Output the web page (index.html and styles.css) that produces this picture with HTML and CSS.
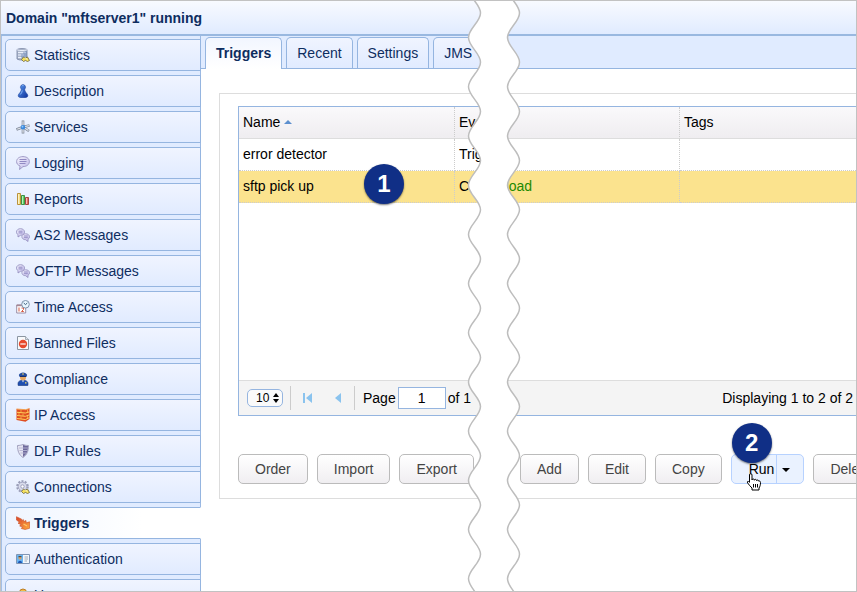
FILE: index.html
```html
<!DOCTYPE html>
<html lang="en">
<head>
<meta charset="utf-8">
<meta name="viewport" content="width=device-width, initial-scale=1">
<title>Domain "mftserver1" running</title>
<link rel="stylesheet" href="styles.css">
</head>
<body>
<div class="window">
  <svg class="defs" aria-hidden="true">
    <defs>
      <linearGradient id="blue" x2="1" y2="1"><stop offset="0" stop-color="#5d9bf0"/><stop offset="1" stop-color="#0b2f9a"/></linearGradient>
      <linearGradient id="lilac" x2="1" y2="1"><stop offset="0" stop-color="#f6f5ff"/><stop offset="1" stop-color="#bdb6e8"/></linearGradient>
      <linearGradient id="fire" x2="1" y2="1"><stop offset="0" stop-color="#d9432a"/><stop offset="1" stop-color="#ffab3d"/></linearGradient>
      <symbol id="bubbles" viewBox="0 0 14 14">
        <path d="M4.500.7c2.300 0 4 1.400 4 3.300S6.800 7.300 4.500 7.300L2 9V6.600C1 6 .5 5.100.5 4 .5 2.100 2.200.7 4.500.7z" fill="url(#lilac)" stroke="#8f8abb" stroke-width=".8"/>
        <path d="M2.500 3.200h4M2.500 4.900h4" stroke="#7f77b8" stroke-width=".8"/>
        <path d="M9.700 5.800c2.200 0 3.800 1.300 3.800 3 0 1.100-.6 2-1.500 2.500v2.200l-2.400-1.800c-2 0-3.700-1.200-3.700-2.900s1.600-3 3.800-3z" fill="url(#lilac)" stroke="#8f8abb" stroke-width=".8"/>
        <path d="M7.800 8h4M7.800 9.700h4" stroke="#7f77b8" stroke-width=".8"/>
      </symbol>
    </defs>
  </svg>

  <header class="titlebar"><h1>Domain "mftserver1" running</h1></header>

  <div class="body">
    <nav class="sidebar" aria-label="Domain">
      <a class="item" href="#statistics">
        <svg class="icon" viewBox="0 0 14 14" aria-hidden="true"><path d="M1 1.500C3 .3 9 .3 11 1.500v9C9 12.500 3 12.500 1 11z" fill="#aeb9cf" stroke="#7582a0" stroke-width=".8"/><path d="M1 1.800c3 1 7 1 10 0M2 4.500h8M2 7h6M2 9.500h4" stroke="#f1f5ff" stroke-width=".9" fill="none"/><path d="M8 4v5M10 3v6M6 6v4" stroke="#6684b8" stroke-width=".8"/><path d="M5.500 11.500l2-2.500 2 1 2-1 2 3.500-2 1-2-1-2 1z" fill="#f3df59" stroke="#6b633d" stroke-width=".8"/><path d="M9 9.500l2 2" stroke="#fff" stroke-width=".9"/></svg>
        Statistics</a>
      <a class="item" href="#description">
        <svg class="icon" viewBox="0 0 14 14" aria-hidden="true"><path d="M7 .5a2.700 2.700 0 0 1 1.700 4.700c.2 2 1.200 3.300 2.500 4.800 1 1.200.8 2.800-.4 3.200-2 .7-5.600.7-7.600 0-1.200-.4-1.400-2-.4-3.200 1.300-1.500 2.300-2.800 2.500-4.800A2.700 2.700 0 0 1 7 .5z" fill="url(#blue)" stroke="#1b4196" stroke-width=".5"/><path d="M6 2c.6-.7 1.300-.6 1.700-.2M6.300 6.500c-.2 1.700-1 3-2 4" stroke="#8fc0ff" stroke-width=".9" fill="none"/></svg>
        Description</a>
      <a class="item" href="#services">
        <svg class="icon" viewBox="0 0 14 14" aria-hidden="true"><path d="M7 7V.5M7 7l6.500-1.500M7 7l6 4M7 7v6.500M7 7L.5 9.500" stroke="#7e8797" stroke-width="2.600"/><path d="M7 7V1.200M7 7l5.800-1.400M7 7l5.500 3.500M7 7v5.800M7 7L1.200 9.300" stroke="#e4e8ee" stroke-width="1.200"/><circle cx="7" cy="7.300" r="2.300" fill="#3987dc"/><circle cx="6.500" cy="6.700" r=".9" fill="#91ccff"/></svg>
        Services</a>
      <a class="item" href="#logging">
        <svg class="icon" viewBox="0 0 14 14" aria-hidden="true"><path d="M7 .6c3.700 0 6.400 2.100 6.400 5s-2.700 5-6.400 5l-3.500 2.900.6-3.500C1.900 9.200.6 7.600.6 5.600c0-2.900 2.700-5 6.400-5z" fill="url(#lilac)" stroke="#9691c0" stroke-width=".9"/><path d="M3.500 3.500h7M3.500 5.500h7M3.500 7.500h6" stroke="#8981bd" stroke-width=".9"/></svg>
        Logging</a>
      <a class="item" href="#reports">
        <svg class="icon" viewBox="0 0 14 14" aria-hidden="true"><path d="M1.500 1.500h3v11h-3z" fill="#f7df82" stroke="#b9923c"/><path d="M5.500 3.500h3v9h-3z" fill="#60d667" stroke="#3d9144"/><path d="M9.500 5.500h3v7h-3z" fill="#ec6b61" stroke="#a24840"/><path d="M2.500 2v10M6.500 4v8M10.500 6v6" stroke="#fff" stroke-opacity=".55"/></svg>
        Reports</a>
      <a class="item" href="#as2"><svg class="icon" aria-hidden="true"><use href="#bubbles"/></svg>AS2 Messages</a>
      <a class="item" href="#oftp"><svg class="icon" aria-hidden="true"><use href="#bubbles"/></svg>OFTP Messages</a>
      <a class="item" href="#time">
        <svg class="icon" viewBox="0 0 14 14" aria-hidden="true"><path d="M.7 5h9v8h-9z" fill="#fff" stroke="#92829c" stroke-width=".9"/><path d="M.7 5.400h9" stroke="#a68794" stroke-width="1.600"/><path d="M3 7.500v4M5.500 8h2v1.500l-2 2h2.300" stroke="#d75a42" fill="none"/><circle cx="9.500" cy="4.300" r="3.800" fill="#e8f7ff" stroke="#7f94ab"/><path d="M7.700 3l1.800 1.600L11.300 3" stroke="#3c5c7b" fill="none"/></svg>
        Time Access</a>
      <a class="item" href="#banned">
        <svg class="icon" viewBox="0 0 14 14" aria-hidden="true"><path d="M1.500.5h8l3 3v10h-11z" fill="#f8fafc" stroke="#8b95a2"/><path d="M9.500.5v3h3" fill="#dce2e8" stroke="#8b95a2" stroke-width=".7"/><circle cx="7" cy="8" r="4.200" fill="#e6482b"/><path d="M4.300 8h5.400" stroke="#fff" stroke-opacity=".85" stroke-width="1.400"/></svg>
        Banned Files</a>
      <a class="item" href="#compliance">
        <svg class="icon" viewBox="0 0 14 14" aria-hidden="true"><path d="M2.200 13.500c-.7-3 .3-5.300 4.800-5.300s5.500 2.300 4.800 5.300z" fill="#1e4fb1" stroke="#173679" stroke-width=".6"/><circle cx="7" cy="5.500" r="3" fill="#e6a764"/><path d="M2.800 3C3.500 1.200 5 .4 7 .4s3.500.8 4.200 2.600L10.300 5H3.700z" fill="#234b9d"/><path d="M4 4.500h6" stroke="#152f6c"/><path d="M7 1.300v1.500M9 10.800h1.500" stroke="#ffdc57" stroke-width="1.200"/><path d="M6 8.500l1 2 1-2z" fill="#dceaff"/></svg>
        Compliance</a>
      <a class="item" href="#ip">
        <svg class="icon" viewBox="0 0 14 14" aria-hidden="true"><path d="M.5 1l9 .7L13.500.6V11l-4 2.700L.5 12z" fill="#df4f22"/><path d="M.5 1l9 .7 4-1.100" stroke="#f2a251" fill="none"/><path d="M1 4.300l8.500.7 4-1.200M1 7.500l8.500.8 4-1.500M1 10.500l8.500 1 4-2" stroke="#ffd05a" stroke-width="1" fill="none"/><path d="M5 2v2.500M3 5v2.500M7 5.500v2.500M5 8.500v2.500M11.500 2v2.500M11.500 8v2.500" stroke="#ffc050" stroke-width=".7"/></svg>
        IP Access</a>
      <a class="item" href="#dlp">
        <svg class="icon" viewBox="0 0 14 14" aria-hidden="true"><path d="M1.500 1.500C4 1.500 5.500 1 7 .5c1.500.5 3 1 5.500 1 0 5.500-1.500 9.500-5.500 12-4-2.500-5.500-6.500-5.500-12z" fill="#e5e5f2" stroke="#9a98b8" stroke-width=".9"/><path d="M7 1v12c3.500-2.500 5-6 5-11C10 2 8.500 1.500 7 1z" fill="#6e6a9c"/><path d="M3 4h8.500M3.500 6.500h7.500M4.500 9h5.500" stroke="#b6b3d2" stroke-width=".9"/></svg>
        DLP Rules</a>
      <a class="item" href="#connections">
        <svg class="icon" viewBox="0 0 14 14" aria-hidden="true"><circle cx="6.500" cy="6.500" r="5.300" fill="none" stroke="#9a9eb8" stroke-width="2" stroke-dasharray="2 1.330"/><circle cx="6.500" cy="6.500" r="4.300" fill="#d9dcec" stroke="#a3a6c2"/><circle cx="6.500" cy="6.500" r="1.700" fill="#fff" stroke="#9c9fbb"/><path d="M5.500 11.500l2-2.500 2 1 2-1 2 3.500-2 1-2-1-2 1z" fill="#f3df59" stroke="#6b633d" stroke-width=".8"/><path d="M9 9.500l2 2" stroke="#fff" stroke-width=".9"/></svg>
        Connections</a>
      <a class="item selected" href="#triggers" aria-current="page">
        <svg class="icon" viewBox="0 0 14 14" aria-hidden="true"><path d="M.4.700L5.700 3.200 5.500 5l1.800-1.500.5 2L10 4.500l.2 2.300 3.400-1v6.500l-4.500 1.200-3.800-1 1.200-1.700-2.800-.7 1.200-1.500-2.900-1.400 1.500-1.100L.4 4z" fill="url(#fire)" stroke="#c94b20" stroke-width=".6"/><path d="M7.500 8l3.500 2" stroke="#ffc668" stroke-width="1.200"/></svg>
        Triggers</a>
      <a class="item" href="#authentication">
        <svg class="icon" viewBox="0 0 14 14" aria-hidden="true"><path d="M.5 2.500h13v9H.5z" fill="#f2f7fc" stroke="#8195b3"/><path d="M1 3h6v8H1z" fill="#68b4f2"/><path d="M2 11c0-3 4-3 4 0z" fill="#1f57b5"/><circle cx="4" cy="5.900" r="1.600" fill="#d8a265"/><path d="M2.500 4.700h3" stroke="#3a352f"/><path d="M8.500 5H12M8.500 7H12M8.500 9H11" stroke="#a4adba"/></svg>
        Authentication</a>
      <a class="item" href="#users">
        <svg class="icon" viewBox="0 0 14 14" aria-hidden="true"><circle cx="7" cy="4.500" r="3.500" fill="#f4bc42" stroke="#bc7c22"/><path d="M2 13.500c0-6 10-6 10 0z" fill="#316fc6"/></svg>
        Users</a>
    </nav>

    <main class="main">
      <div class="tabs" role="tablist">
        <button class="tab active" type="button" role="tab" aria-selected="true">Triggers</button>
        <button class="tab" type="button" role="tab" aria-selected="false">Recent</button>
        <button class="tab" type="button" role="tab" aria-selected="false">Settings</button>
        <button class="tab" type="button" role="tab" aria-selected="false">JMS</button>
      </div>

      <section class="panel">
        <div class="grid">
          <div class="rows">
            <table>
              <colgroup><col class="col-name"><col class="col-event"><col></colgroup>
              <thead>
                <tr>
                  <th scope="col" aria-sort="ascending">Name<svg class="sort" viewBox="0 0 8 4" aria-hidden="true"><path d="M0 4l4-4 4 4z"/></svg></th>
                  <th scope="col">Event</th>
                  <th scope="col">Tags</th>
                </tr>
              </thead>
              <tbody>
                <tr><td>error detector</td><td>Trigger</td><td></td></tr>
                <tr class="picked"><td>sftp pick up<span class="badge badge-row">1</span></td><td><div class="event"><span>C</span><span class="kind">Upload</span></div></td><td></td></tr>
              </tbody>
            </table>
          </div>
          <div class="pager">
            <span class="size">
              <select aria-label="Rows per page"><option>10</option><option>20</option></select>
              <svg viewBox="0 0 6 10" aria-hidden="true"><path d="M0 4l3-4 3 4zM0 6l3 4 3-4z"/></svg>
            </span>
            <div class="steps">
              <button class="step" type="button" aria-label="First page"><svg viewBox="0 0 10 10" aria-hidden="true"><path d="M0 0h2v10H0zM9 0v10L3 5z"/></svg></button>
              <button class="step" type="button" aria-label="Previous page"><svg viewBox="0 0 10 10" aria-hidden="true"><path d="M8 0v10L2 5z"/></svg></button>
            </div>
            <label for="page">Page</label>
            <input id="page" type="text" value="1">
            <span>of 1</span>
            <span class="summary">Displaying 1 to 2 of 2</span>
          </div>
        </div>

        <div class="actions">
          <div class="group">
            <button class="btn" type="button">Order</button>
            <button class="btn" type="button">Import</button>
            <button class="btn" type="button">Export</button>
          </div>
          <div class="group">
            <button class="btn" type="button">Add</button>
            <button class="btn" type="button">Edit</button>
            <button class="btn" type="button">Copy</button>
            <div class="split">
              <button class="run" type="button">Run</button>
              <button class="more" type="button" aria-label="Run options"><svg viewBox="0 0 8 4" aria-hidden="true"><path d="M0 0h8L4 4z"/></svg></button>
              <span class="badge badge-run">2</span>
              <svg class="cursor" viewBox="0 0 16 18" aria-hidden="true"><path d="M3.500 2c0-1.800 2.500-1.800 2.500 0v5c0-1.400 2.300-1.400 2.300.2C8.300 6 10.600 6 10.700 7.700c.1-1.100 2-.9 2.100.5 1-.5 1.700.2 1.700 1.300 0 2.500-.5 4-1.500 5.500v2H6v-2c-1.500-1.500-3-3-4.300-5C.7 8.400 2 7.700 3.500 9.300z"/><path class="lines" d="M7.500 11v3.500M9.500 11v3.500M11.500 11v3.500"/></svg>
            </div>
            <button class="btn" type="button">Delete</button>
          </div>
        </div>
      </section>
    </main>
  </div>

  <svg class="tear" viewBox="0 0 54 592" preserveAspectRatio="xMidYMin slice" aria-hidden="true">
    <path d="M1.500-11.600c0 9 12 15.600 12 24.600s-12 15.600-12 24.600s12 15.600 12 24.600s-12 15.600-12 24.600s12 15.600 12 24.600s-12 15.600-12 24.600s12 15.600 12 24.600s-12 15.600-12 24.600s12 15.600 12 24.600s-12 15.600-12 24.600s12 15.600 12 24.600s-12 15.600-12 24.600s12 15.600 12 24.600s-12 15.600-12 24.600s12 15.600 12 24.600s-12 15.600-12 24.600s12 15.600 12 24.600s-12 15.600-12 24.600s12 15.600 12 24.600s-12 15.600-12 24.600s12 15.600 12 24.600s-12 15.600-12 24.600s12 15.600 12 24.600s-12 15.600-12 24.600s12 15.600 12 24.600s-12 15.600-12 24.600h39c0-9 12-15.600 12-24.600s-12-15.600-12-24.600s12-15.600 12-24.600s-12-15.600-12-24.600s12-15.600 12-24.600s-12-15.600-12-24.600s12-15.600 12-24.600s-12-15.600-12-24.600s12-15.600 12-24.600s-12-15.600-12-24.600s12-15.600 12-24.600s-12-15.600-12-24.600s12-15.600 12-24.600s-12-15.600-12-24.600s12-15.600 12-24.600s-12-15.600-12-24.600s12-15.600 12-24.600s-12-15.600-12-24.600s12-15.600 12-24.600s-12-15.600-12-24.600s12-15.600 12-24.600s-12-15.600-12-24.600s12-15.600 12-24.600s-12-15.600-12-24.600s12-15.600 12-24.600s-12-15.600-12-24.600z"/>
  </svg>
</div>
</body>
</html>
```
FILE: styles.css
```css
* { box-sizing: border-box; }

body {
  margin: 0;
  font: 14px/20px "Liberation Sans", Arial, sans-serif;
  color: #000;
  background: #fff;
}

button, input, select { font: inherit; color: inherit; margin: 0; }

.defs { position: absolute; width: 0; height: 0; }

.window {
  position: relative;
  display: flex;
  flex-direction: column;
  height: 100vh;
  border: 1px solid #c2c2c2;
  overflow: hidden;
}

.titlebar {
  flex: none;
  padding: 7px 5px 6px;
  background: linear-gradient(#f8faff, #e0ebff);
  border-bottom: 2px solid #99b8e0;
}

.titlebar h1 { margin: 0; font-size: 14px; line-height: 20px; color: #0e2d5f; }

.body { flex: 1; display: flex; min-height: 0; }

/* Sidebar */
.sidebar {
  flex: none;
  display: flex;
  flex-direction: column;
  gap: 4px;
  width: 200px;
  padding: 3px 0 0 3px;
  background: #e0ebff;
  border-left: 1px solid #a3bfe6;
  box-shadow: inset -1px 0 #9bb9e3;
}

.item {
  flex: none;
  display: flex;
  align-items: center;
  gap: 4px;
  height: 32px;
  padding-left: 10px;
  border: 1px solid #95b5e0;
  border-radius: 5px 0 0 5px;
  background: linear-gradient(#f0f4ff, #e1ebff);
  color: #0e2d5f;
  text-decoration: none;
}

.item.selected {
  font-weight: bold;
  background: linear-gradient(to right, #eff5ff, #fff 70%);
  border-right-color: #fff;
}

.icon { flex: none; width: 14px; height: 14px; }

/* Tabs */
.main { flex: 1; min-width: 0; overflow: hidden; }

.tabs {
  display: flex;
  gap: 4px;
  padding: 1px 4px 0;
  background: #e0ebff;
  border-bottom: 1px solid #95b5e0;
}

.tab {
  height: 31px;
  padding: 0 10px;
  border: 1px solid #95b5e0;
  border-bottom: 0;
  border-radius: 5px 5px 0 0;
  background: linear-gradient(#f0f4ff, #e1ebff);
  color: #0e2d5f;
}

.tab.active {
  font-weight: bold;
  background: linear-gradient(#f2f6ff, #fff);
  margin-bottom: -1px;
  height: 32px;
  padding-bottom: 2px;
}

/* Panel */
.panel {
  margin: 24px 0 0 18px;
  padding: 12px 0 14px 18px;
  border: 1px solid #ddd;
  border-right: 0;
}

.grid { border: 1px solid #95b5e0; border-right: 0; }

.rows { min-height: 273px; }

table { width: 100%; table-layout: fixed; border-collapse: separate; border-spacing: 0; }

.col-name { width: 216px; }
.col-event { width: 225px; }

th, td {
  position: relative;
  height: 32px;
  padding: 0 4px 2px;
  border: 0 dotted #ccc;
  border-width: 0 1px 1px 0;
  text-align: left;
  font-weight: normal;
}

th:last-child, td:last-child { border-right: 0; }

th { border-bottom: 1px solid #ddd; background: linear-gradient(#faf9fb, #efedf0); }

.picked td { background: #fbe38e; }

.sort { width: 8px; height: 4px; margin: 0 0 3px 4px; fill: #5c8fce; }

.event { display: flex; justify-content: space-between; width: 73px; }
.kind { color: #1e8a00; }

/* Pager */
.pager {
  display: flex;
  align-items: center;
  height: 35px;
  padding: 0 3px 0 8px;
  border-top: 1px solid #ddd;
  background: #f4f4f4;
}

.size { position: relative; display: flex; }

.size select {
  appearance: none;
  width: 36px;
  height: 18px;
  padding: 0 8px;
  border: 1px solid #95b5e0;
  border-radius: 5px;
  background: #fafafa;
  font-size: 12px;
  line-height: 16px;
}

.size svg { position: absolute; right: 4px; top: 4px; width: 6px; height: 10px; pointer-events: none; }

.steps {
  display: flex;
  margin: 0 8px 0 7px;
  padding: 0 1px 0 2px;
  border: 1px solid #ccc;
  border-width: 0 1px;
}

.step { width: 30px; height: 24px; padding: 0; border: 0; background: none; line-height: 0; }
.step svg { width: 10px; height: 10px; fill: #8ac3ee; }

.pager label { margin-right: 2px; }

.pager input {
  width: 48px;
  height: 22px;
  margin-right: 2px;
  padding: 0;
  border: 1px solid #95b5e0;
  background: #fff;
  text-align: center;
}

.summary { margin-left: auto; }

/* Actions */
.actions { display: flex; gap: 46px; margin-top: 38px; }
.group { display: flex; flex: none; gap: 9px; }

.btn, .split {
  flex: none;
  height: 30px;
  border: 1px solid #bbb;
  border-radius: 5px;
}

.btn { padding: 0 16px; background: linear-gradient(#fff, #f0eef1); color: #444; }

.split {
  position: relative;
  display: flex;
  border-color: #b7d2ff;
  background: #eaf2ff;
}

.split button { padding: 0; border: 0; background: none; }
.split .run { padding: 0 2px 0 17px; }
.split .more { width: 27px; border-left: 1px solid #b7d2ff; line-height: 0; padding-right: 9px; }
.more svg { width: 8px; height: 4px; }

/* Overlays */
.badge {
  position: absolute;
  display: flex;
  align-items: center;
  justify-content: center;
  width: 40px;
  height: 40px;
  border-radius: 50%;
  background: #102f86;
  box-shadow: 0 1px 2px #0008;
  color: #fff;
  font-size: 24px;
  font-weight: bold;
}

.badge-row { left: 125px; top: -7px; z-index: 1; }
.badge-run { left: 0; top: -32px; }

.cursor { position: absolute; left: 14px; top: 18px; width: 16px; height: 18px; fill: #fff; stroke: #000; }
.cursor .lines { fill: none; }

.tear {
  position: absolute;
  left: 466px;
  top: -1px;
  width: 54px;
  height: 100vh;
  fill: #fff;
  stroke: #bdbdbd;
  stroke-width: 1.500;
  pointer-events: none;
}
```
